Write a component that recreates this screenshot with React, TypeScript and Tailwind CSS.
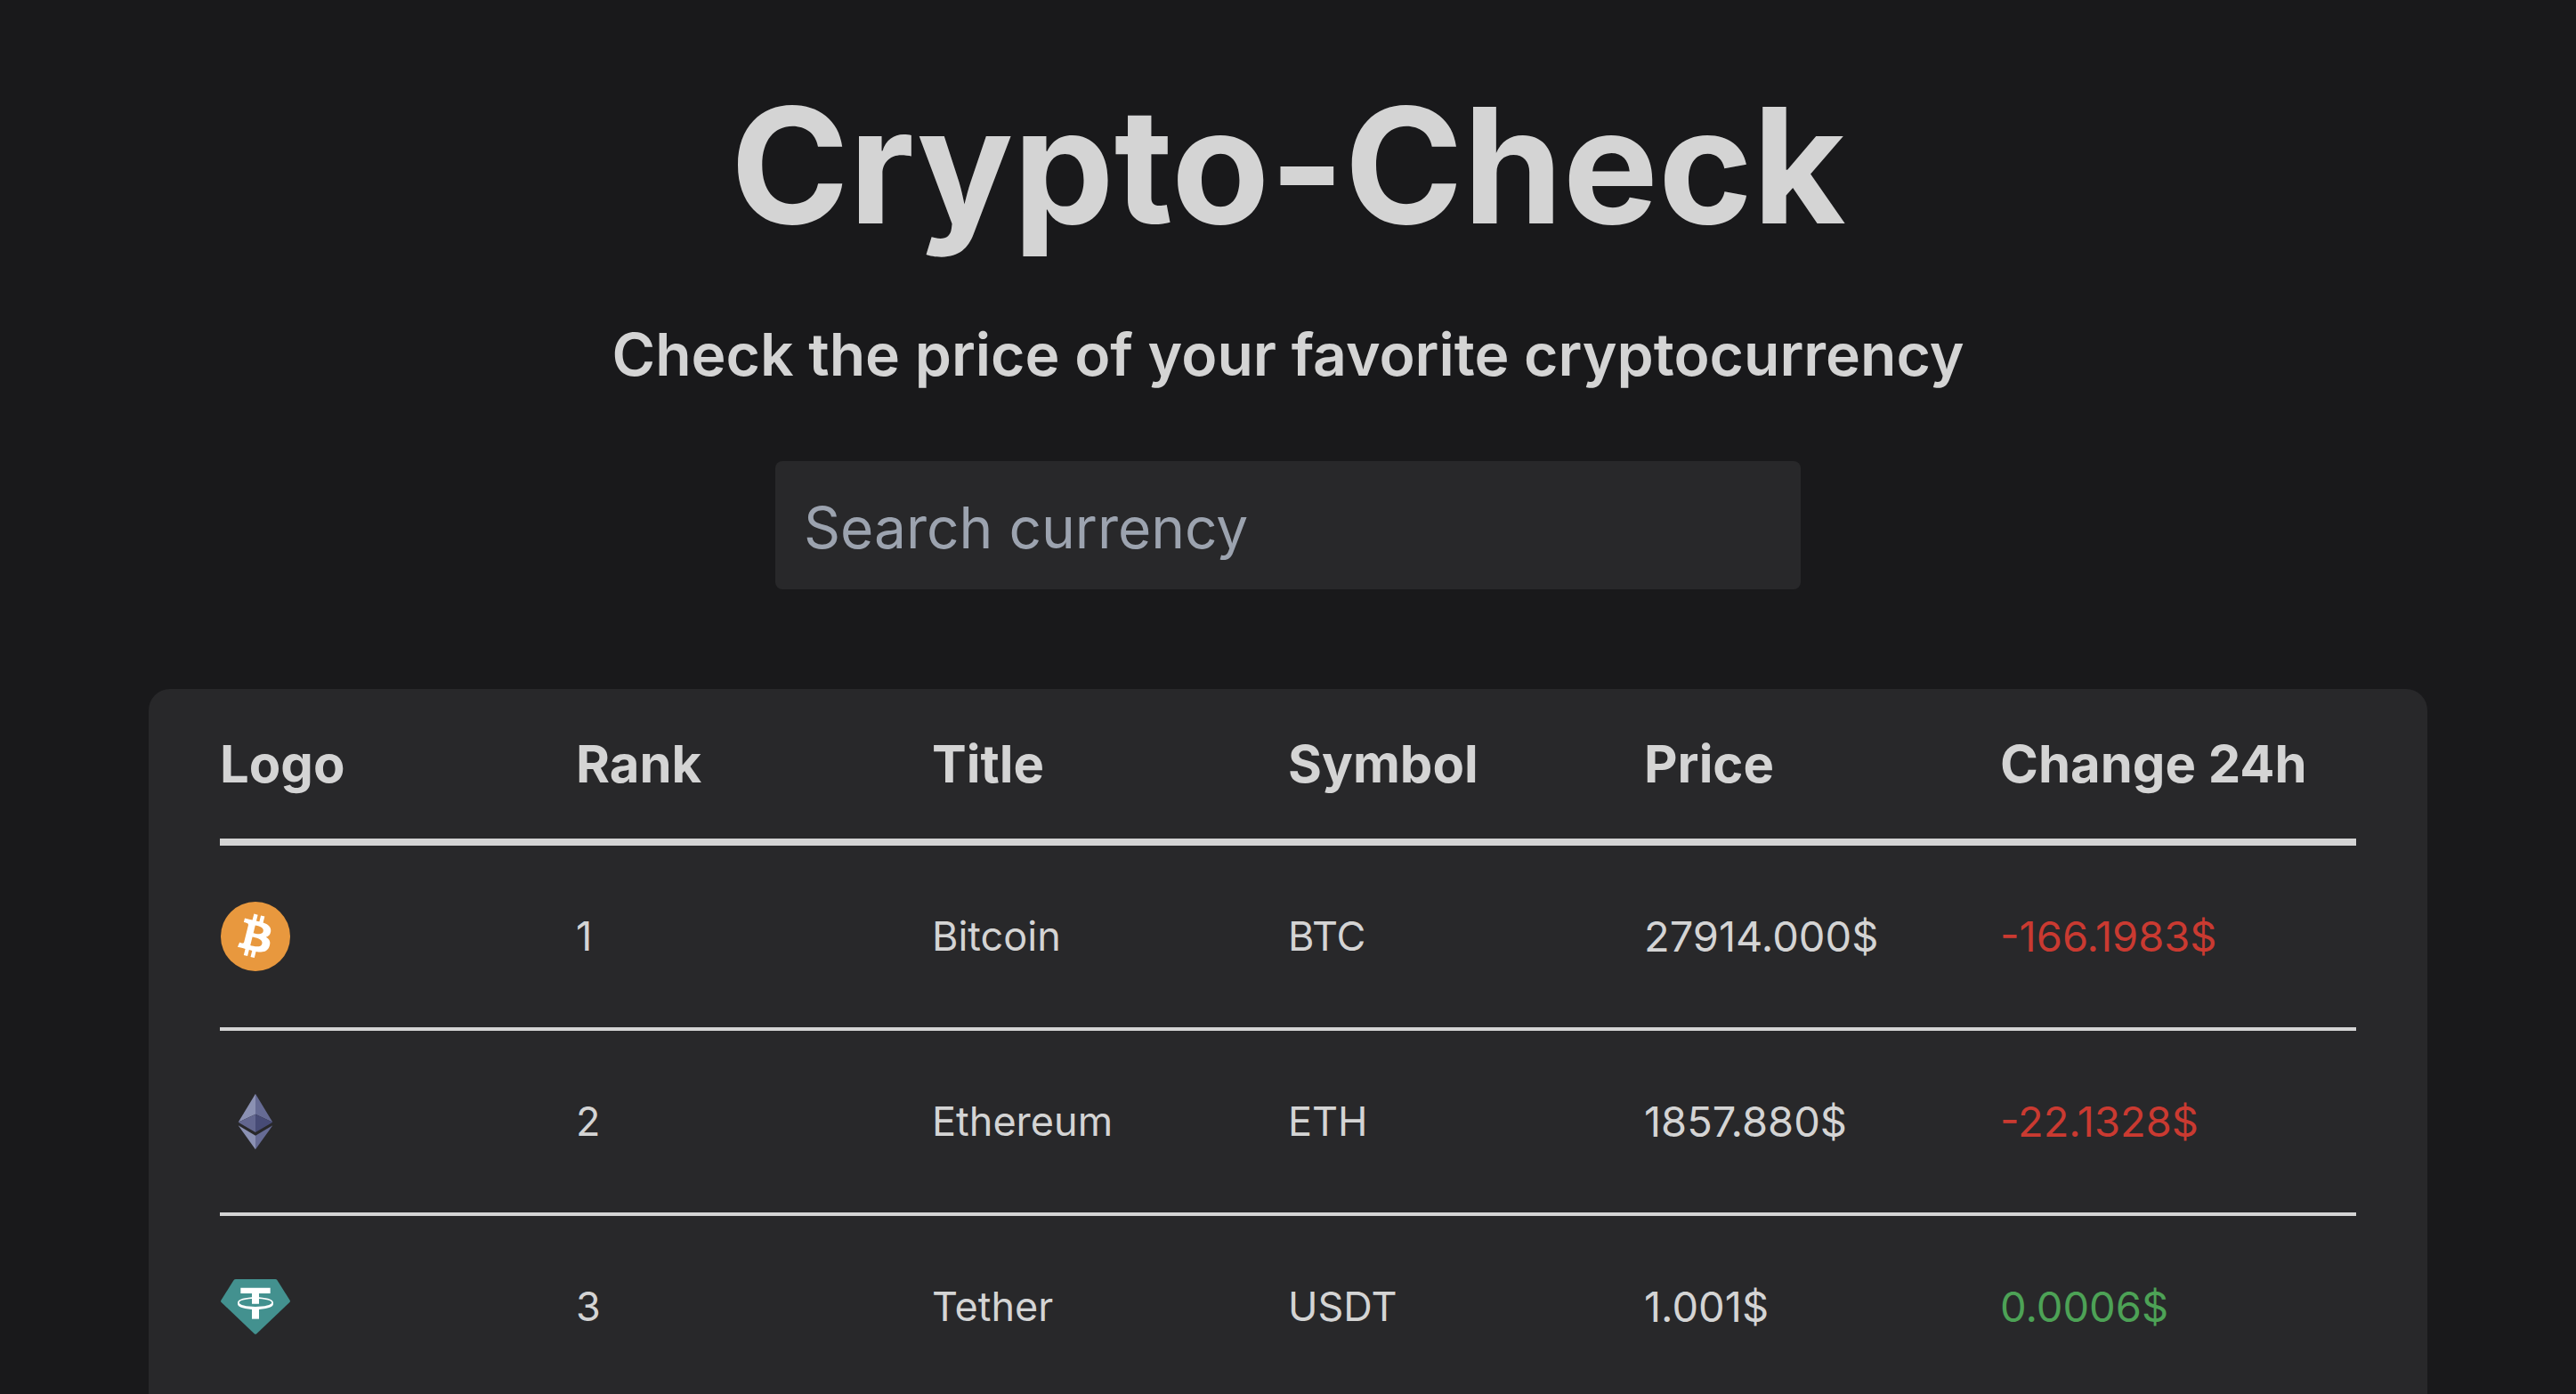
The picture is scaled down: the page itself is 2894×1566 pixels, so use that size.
import type { ReactNode } from "react";

type Coin = {
  rank: number;
  title: string;
  symbol: string;
  price: string;
  change: string;
  rising: boolean;
  logo: ReactNode;
};

function BitcoinLogo() {
  return (
    <svg viewBox="-0.8 -0.8 65.6 65.6" className="size-20" role="img" aria-label="Bitcoin">
      <circle cx="32" cy="32" r="32" fill="#e8983e" />
      <path
        fill="#fff"
        d="m46.103,27.444c0.637-4.258-2.605-6.547-7.038-8.074l1.438-5.768-3.511-0.875-1.4,5.616c-0.923-0.23-1.871-0.447-2.813-0.662l1.41-5.653-3.509-0.875-1.439,5.766c-0.764-0.174-1.514-0.346-2.242-0.527l0.004-0.018-4.842-1.209-0.934,3.75s2.605,0.597,2.55,0.634c1.422,0.355,1.679,1.296,1.636,2.042l-1.638,6.571c0.098,0.025,0.225,0.061,0.365,0.117-0.117-0.029-0.242-0.061-0.371-0.092l-2.296,9.205c-0.174,0.432-0.615,1.08-1.609,0.834,0.035,0.051-2.552-0.637-2.552-0.637l-1.743,4.019,4.569,1.139c0.85,0.213,1.683,0.436,2.503,0.646l-1.453,5.834,3.507,0.875,1.439-5.772c0.958,0.26,1.888,0.5,2.798,0.726l-1.434,5.745,3.511,0.875,1.453-5.823c5.987,1.133,10.489,0.676,12.384-4.739,1.527-4.36-0.076-6.875-3.226-8.515,2.294-0.529,4.022-2.038,4.483-5.155zm-8.022,11.249c-1.085,4.36-8.426,2.003-10.806,1.412l1.928-7.729c2.38,0.594,10.012,1.77,8.878,6.317zm1.086-11.312c-0.99,3.966-7.1,1.951-9.082,1.457l1.748-7.01c1.982,0.494,8.365,1.416,7.334,5.553z"
      />
    </svg>
  );
}

function EthereumLogo() {
  return (
    <svg viewBox="51 60 240 240" className="size-20" role="img" aria-label="Ethereum">
      <path fill="#8b91b3" d="M171 86 113 182 171 155Z" />
      <path fill="#666b94" d="M171 86 229 182 171 155Z" />
      <path fill="#62668f" d="M171 155 113 182 171 216Z" />
      <path fill="#474b76" d="M171 155 229 182 171 216Z" />
      <path fill="#8b91b3" d="M113 193 171 227V274Z" />
      <path fill="#666b94" d="M229 193 171 227V274Z" />
    </svg>
  );
}

function TetherLogo() {
  return (
    <svg viewBox="51 54 240 240" className="size-20" role="img" aria-label="Tether">
      <path
        fill="#43918f"
        d="M105 81H238Q242 81 244 84L287 152Q289 156 286 159L175 265Q171 268 167 265L56 159Q53 156 55 152L98 84Q100 81 105 81Z"
      />
      <path fill="#fff" d="M121 110H221V129H183V164H159V129H121Z" />
      <path fill="#fff" d="M159 178H183V215H159Z" />
      <path
        fill="#fff"
        fillRule="evenodd"
        d="M111 160C111 149 137 142 171 142S231 149 231 160V165C231 176 205 183 171 183S111 176 111 165ZM116 160C116 168 140 174 171 174S226 168 226 160S202 147 171 147S116 152 116 160Z"
      />
    </svg>
  );
}

const coins: Coin[] = [
  { rank: 1, title: "Bitcoin", symbol: "BTC", price: "27914.000$", change: "-166.1983$", rising: false, logo: <BitcoinLogo /> },
  { rank: 2, title: "Ethereum", symbol: "ETH", price: "1857.880$", change: "-22.1328$", rising: false, logo: <EthereumLogo /> },
  { rank: 3, title: "Tether", symbol: "USDT", price: "1.001$", change: "0.0006$", rising: true, logo: <TetherLogo /> },
];

const columns = ["Logo", "Rank", "Title", "Symbol", "Price", "Change 24h"];

export default function App() {
  return (
    <div className="h-screen overflow-hidden bg-[#19191b] font-['Inter',sans-serif] text-[#d4d4d4]">
      <header className="flex flex-col items-center px-20 pt-[90px] text-center">
        <h1 className="text-[180px] leading-[192px] font-bold">Crypto-Check</h1>
        <p className="mt-[76px] text-[66px] leading-[80px] font-semibold">
          Check the price of your favorite cryptocurrency
        </p>
        <input
          type="search"
          aria-label="Search currency"
          placeholder="Search currency"
          className="mt-20 h-36 w-full max-w-[1152px] rounded-lg bg-[#28282a] px-8 pt-1 text-[64px] outline-none placeholder:text-[#9ca3af]"
        />
      </header>
      <main className="mx-auto mt-28 w-full max-w-[2560px] rounded-3xl bg-[#28282a] px-20 pb-20">
        <table className="w-full table-fixed border-separate border-spacing-0 text-left">
          <thead>
            <tr>
              {columns.map((name) => (
                <th key={name} scope="col" className="h-44 border-b-8 border-[#d4d4d4] p-0 text-[58px] leading-[72px] font-bold">
                  {name}
                </th>
              ))}
            </tr>
          </thead>
          <tbody className="text-[45px] leading-[64px] [&_td]:h-52 [&_td]:border-b-4 [&_td]:border-[#d4d4d4] [&_td]:p-0">
            {coins.map((coin) => (
              <tr key={coin.symbol}>
                <td>{coin.logo}</td>
                <td>{coin.rank}</td>
                <td>{coin.title}</td>
                <td>{coin.symbol}</td>
                <td className="text-[47px]">{coin.price}</td>
                <td className={coin.rising ? "text-[47px] text-[#4da256]" : "text-[47px] text-[#ca3a31]"}>{coin.change}</td>
              </tr>
            ))}
          </tbody>
        </table>
      </main>
    </div>
  );
}
